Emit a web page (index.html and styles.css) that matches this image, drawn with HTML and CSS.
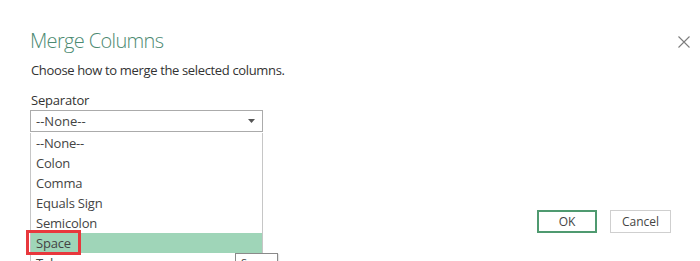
FILE: index.html
```html
<!DOCTYPE html>
<html lang="en">
<head>
<meta charset="utf-8">
<title>Merge Columns</title>
<link rel="stylesheet" href="styles.css">
</head>
<body>
<div class="dialog">
  <button class="close" aria-label="Close">
    <svg width="12" height="12" viewBox="0 0 12 12"><path d="M0.5 0.5 L11.5 11.5 M11.5 0.5 L0.5 11.5" stroke="#7d7d7d" stroke-width="1.1" fill="none"/></svg>
  </button>
  <h1 class="title">Merge Columns</h1>
  <p class="desc">Choose how to merge the selected columns.</p>
  <div class="field">
    <div class="label">Separator</div>
    <div class="select-wrap">
      <div class="select">
        <span class="value">--None--</span>
        <svg class="arrow" width="7" height="4" viewBox="0 0 7 4"><path d="M0 0 H7 L3.5 4 Z" fill="#555"/></svg>
      </div>
      <ul class="listbox">
        <li class="item">--None--</li>
        <li class="item">Colon</li>
        <li class="item">Comma</li>
        <li class="item">Equals Sign</li>
        <li class="item">Semicolon</li>
        <li class="item selected"><span class="mark"></span>Space</li>
        <li class="item">Tab</li>
      </ul>
      <div class="tooltip">Space</div>
    </div>
  </div>
  <div class="footer">
    <button class="btn primary">OK</button>
    <button class="btn">Cancel</button>
  </div>
</div>
</body>
</html>
```
FILE: styles.css
```css
html, body {
  margin: 0;
  padding: 0;
  background: #ffffff;
  overflow: hidden;
}
body {
  width: 700px;
  height: 261px;
  font-family: "Open Sans", "Liberation Sans", sans-serif;
  color: #3a3a3a;
}
.dialog {
  position: relative;
  padding: 0 29px 0 30px;
  height: 261px;
  box-sizing: border-box;
}
.close {
  position: absolute;
  top: 7px;
  left: 678px;
  width: 12px;
  height: 12px;
  padding: 0;
  border: 0;
  background: none;
  display: block;
}
.close svg { display: block; }
.title {
  margin: 29px 0 0 0;
  font-size: 20px;
  line-height: 24px;
  font-weight: 300;
  color: #4d8a72;
  letter-spacing: -0.65px;
}
.desc {
  margin: 8px 0 0 1px;
  font-size: 13px;
  line-height: 18px;
  color: #333;
  letter-spacing: -0.35px;
}
.field { margin-top: 12px; }
.label {
  margin-left: 1px;
  font-size: 13px;
  line-height: 18px;
  color: #333;
  letter-spacing: -0.2px;
}
.select-wrap {
  position: relative;
  width: 233px;
  margin-top: 1px;
}
.select {
  height: 20px;
  border: 1px solid #ababab;
  display: flex;
  align-items: center;
  justify-content: space-between;
  padding: 0 7px 0 5px;
  font-size: 13px;
  line-height: 20px;
  color: #444;
}
.arrow { display: block; }
.listbox {
  position: absolute;
  top: 23px;
  left: 0;
  width: 231px;
  margin: 0;
  padding: 0;
  list-style: none;
  border: 1px solid #c6c6c6;
  border-top: 0;
  background: #fff;
}
.item {
  position: relative;
  height: 20px;
  line-height: 20px;
  padding-left: 5px;
  font-size: 13px;
  color: #444;
  letter-spacing: -0.2px;
}
.item.selected {
  background: #9fd5b8;
}
.mark {
  position: absolute;
  left: -5px;
  top: -3px;
  width: 49px;
  height: 19px;
  border: 3px solid #e8383d;
}
.tooltip {
  position: absolute;
  top: 143px;
  left: 205px;
  width: 36px;
  height: 20px;
  border: 1px solid #8a8a8a;
  background: #fff;
  font-size: 11px;
  line-height: 18px;
  padding-left: 5px;
  color: #444;
  box-shadow: 1px 1px 1px rgba(0,0,0,0.1);
}
.footer {
  display: flex;
  justify-content: flex-end;
  gap: 13px;
  margin-top: 78px;
}
.btn {
  width: 61px;
  height: 23px;
  box-sizing: border-box;
  border: 1px solid #cfcfcf;
  background: #fff;
  font-family: "Open Sans", "Liberation Sans", sans-serif;
  font-size: 12px;
  color: #444;
  padding: 0;
}
.btn.primary {
  width: 60px;
  border: 2px solid #4f9a70;
}
```
